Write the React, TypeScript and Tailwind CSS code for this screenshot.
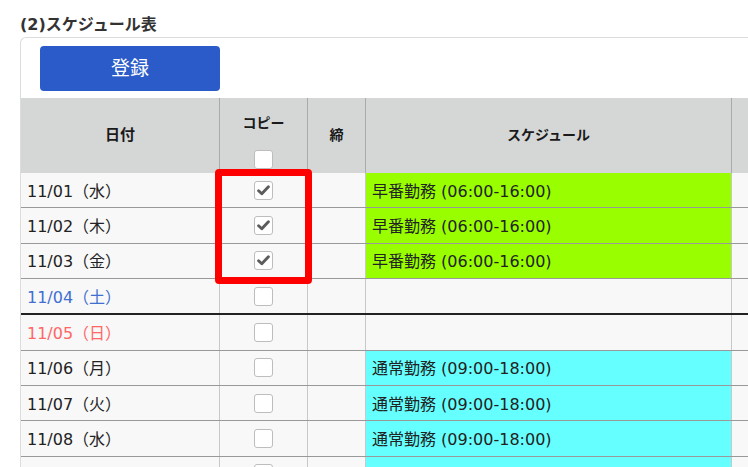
import React from "react";

type Row = { date: string; color?: string; checked?: boolean; sched?: string; bg?: string; thick?: boolean };

const rows: Row[] = [
  { date: "11/01（水）", checked: true, sched: "早番勤務 (06:00-16:00)", bg: "bg-[#99ff00]" },
  { date: "11/02（木）", checked: true, sched: "早番勤務 (06:00-16:00)", bg: "bg-[#99ff00]" },
  { date: "11/03（金）", checked: true, sched: "早番勤務 (06:00-16:00)", bg: "bg-[#99ff00]" },
  { date: "11/04（土）", color: "text-[#3f6fd1]", thick: true },
  { date: "11/05（日）", color: "text-[#ff6666]" },
  { date: "11/06（月）", sched: "通常勤務 (09:00-18:00)", bg: "bg-[#66ffff]" },
  { date: "11/07（火）", sched: "通常勤務 (09:00-18:00)", bg: "bg-[#66ffff]" },
  { date: "11/08（水）", sched: "通常勤務 (09:00-18:00)", bg: "bg-[#66ffff]" },
  { date: "", bg: "bg-[#66ffff]" },
];

function Box({ checked }: { checked?: boolean }) {
  return (
    <div className="w-[19px] h-[19px] bg-white border border-[#bdbdbd] rounded-[3px] flex items-center justify-center">
      {checked && (
        <svg width="13" height="11" viewBox="0 0 13 11">
          <path d="M1.6 5.8 L4.8 8.8 L11.4 1.8" fill="none" stroke="#5c5c5c" strokeWidth="2.9" strokeLinecap="round" strokeLinejoin="round" />
        </svg>
      )}
    </div>
  );
}

export default function App() {
  return (
    <div
      className="relative w-[748px] h-[467px] overflow-hidden bg-white text-[#222]"
      style={{ fontFamily: '"DejaVu Sans", "Noto Sans CJK JP", sans-serif' }}
    >
      <div className="pl-[20px] mt-[13px] h-[24px] leading-[24px] text-[16px] font-bold text-[#333]">(2)スケジュール表</div>
      <div className="ml-[20px] border-t border-l border-[#dcdcdc] rounded-tl-[6px]">
        <div className="pt-[8px] pl-[19px] pb-[7px]">
          <div className="w-[180px] h-[45px] rounded-[4px] bg-[#2a5bc8] text-white text-[19px] flex items-center justify-center">登録</div>
        </div>
        <div className="flex h-[75px] bg-[#d5d7d7] text-[14px] font-bold text-[#1a1a1a]">
          <div className="w-[199px] border-r border-[#aaa] flex items-center justify-center text-[15px]">日付</div>
          <div className="w-[88px] border-r border-[#aaa] flex flex-col items-center pt-[15px]">
            <div className="leading-[20px]">コピー</div>
            <div className="mt-[17px]"><Box /></div>
          </div>
          <div className="w-[58px] border-r border-[#aaa] flex items-center justify-center">締</div>
          <div className="w-[366px] border-r border-[#aaa] flex items-center justify-center">スケジュール</div>
          <div className="flex-1" />
        </div>
        {rows.map((r, i) => (
          <div
            key={i}
            className={`flex bg-[#f8f8f8] text-[16px] ${r.thick ? "h-[36px] border-b-2 border-[#222]" : "h-[35.4px] border-b border-[#999]"}`}
          >
            <div className={`w-[199px] border-r border-[#c8c8c8] flex items-center pl-[6px] pt-[3px] leading-[20px] ${r.color ?? "text-[#222]"}`}>{r.date}</div>
            <div className="w-[88px] border-r border-[#c8c8c8] flex items-center justify-center"><Box checked={r.checked} /></div>
            <div className="w-[58px] border-r border-[#c8c8c8]" />
            <div className={`w-[366px] border-r border-[#c8c8c8] flex items-center pl-[6px] pt-[3px] leading-[20px] ${r.bg ?? ""}`}>{r.sched ?? ""}</div>
            <div className="flex-1" />
          </div>
        ))}
      </div>
      <div className="absolute left-[215px] top-[169px] w-[97px] h-[115px] border-[7px] border-[#ff0000] rounded-[4px]" />
    </div>
  );
}
